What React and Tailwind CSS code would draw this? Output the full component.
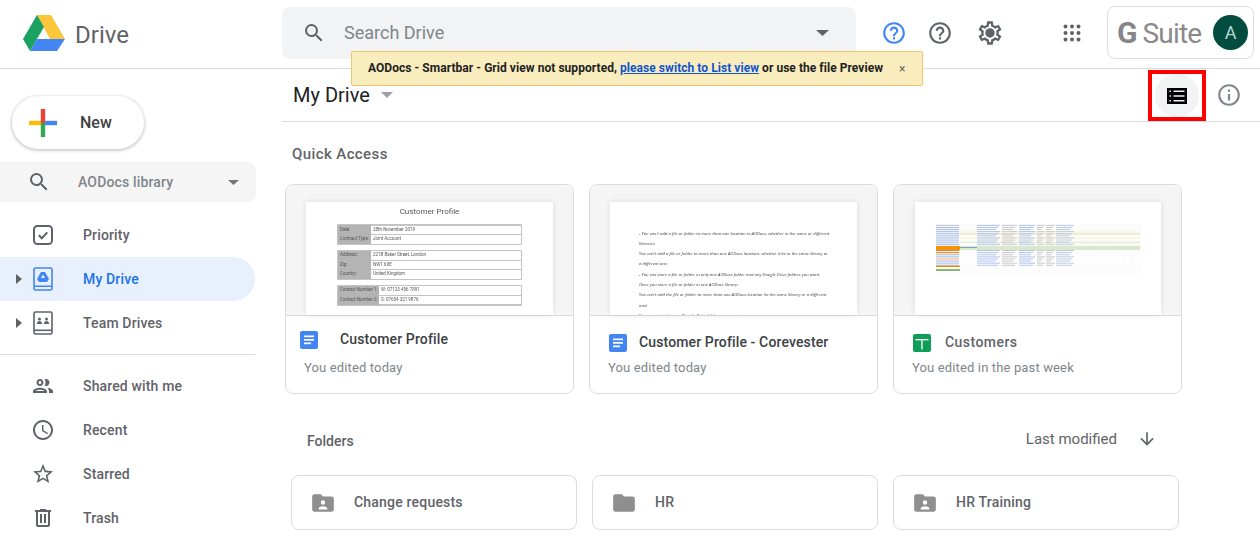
import React from 'react'

const Icon = ({ d, size = 24, className = '', fill = 'currentColor' }) => (
  <svg width={size} height={size} viewBox="0 0 24 24" fill={fill} className={className}>
    <path d={d} />
  </svg>
)

const paths = {
  search: 'M15.5 14h-.79l-.28-.27A6.47 6.47 0 0 0 16 9.5 6.5 6.5 0 1 0 9.5 16c1.61 0 3.09-.59 4.23-1.57l.27.28v.79l5 4.99L20.49 19l-4.99-5zm-6 0C7.01 14 5 11.99 5 9.5S7.01 5 9.5 5 14 7.01 14 9.5 11.99 14 9.5 14z',
  help: 'M11 18h2v-2h-2v2zm1-16C6.48 2 2 6.48 2 12s4.48 10 10 10 10-4.48 10-10S17.52 2 12 2zm0 18c-4.41 0-8-3.59-8-8s3.59-8 8-8 8 3.59 8 8-3.59 8-8 8zm0-14c-2.21 0-4 1.79-4 4h2c0-1.1.9-2 2-2s2 .9 2 2c0 2-3 1.75-3 5h2c0-2.25 3-2.5 3-5 0-2.21-1.79-4-4-4z',
  gear: 'M19.43 12.98c.04-.32.07-.64.07-.98s-.03-.66-.07-.98l2.11-1.65c.19-.15.24-.42.12-.64l-2-3.46c-.12-.22-.39-.3-.61-.22l-2.49 1c-.52-.4-1.08-.73-1.69-.98l-.38-2.65A.488.488 0 0 0 14 2h-4c-.25 0-.46.18-.49.42l-.38 2.65c-.61.25-1.17.59-1.69.98l-2.49-1c-.23-.09-.49 0-.61.22l-2 3.46c-.13.22-.07.49.12.64l2.11 1.65c-.04.32-.07.65-.07.98s.03.66.07.98l-2.11 1.65c-.19.15-.24.42-.12.64l2 3.46c.12.22.39.3.61.22l2.49-1c.52.4 1.08.73 1.69.98l.38 2.65c.03.24.24.42.49.42h4c.25 0 .46-.18.49-.42l.38-2.65c.61-.25 1.17-.59 1.69-.98l2.49 1c.23.09.49 0 .61-.22l2-3.46c.12-.22.07-.49-.12-.64l-2.11-1.65zM17.45 11.27c.04.31.05.52.05.73 0 .21-.02.43-.05.73l-.14 1.13.89.7 1.08.84-.7 1.21-1.27-.51-1.04-.42-.9.68c-.43.32-.84.56-1.25.73l-1.06.43-.16 1.13-.2 1.35h-1.4l-.19-1.35-.16-1.13-1.06-.43c-.43-.18-.83-.41-1.23-.71l-.91-.7-1.06.43-1.27.51-.7-1.21 1.08-.84.89-.7-.14-1.13c-.03-.31-.05-.54-.05-.74s.02-.43.05-.73l.14-1.13-.89-.7-1.08-.84.7-1.21 1.27.51 1.04.42.9-.68c.43-.32.84-.56 1.25-.73l1.06-.43.16-1.13.2-1.35h1.39l.19 1.35.16 1.13 1.06.43c.43.18.83.41 1.23.71l.91.7 1.06-.43 1.27-.51.7 1.21-1.07.85-.89.7.14 1.13zM12 8c-2.21 0-4 1.79-4 4s1.79 4 4 4 4-1.79 4-4-1.79-4-4-4z',
  info: 'M11 7h2v2h-2V7zm0 4h2v6h-2v-6zm1-9C6.48 2 2 6.48 2 12s4.48 10 10 10 10-4.48 10-10S17.52 2 12 2zm0 18c-4.41 0-8-3.59-8-8s3.59-8 8-8 8 3.59 8 8-3.59 8-8 8z',
  people: 'M9 13.75c-2.34 0-7 1.17-7 3.5V19h14v-1.75c0-2.33-4.66-3.5-7-3.5zM4.34 17c.84-.58 2.87-1.25 4.66-1.25s3.82.67 4.66 1.25H4.34zM9 12c1.93 0 3.5-1.57 3.5-3.5S10.93 5 9 5 5.5 6.57 5.5 8.5 7.07 12 9 12zm0-5c.83 0 1.5.67 1.5 1.5S9.83 10 9 10s-1.5-.67-1.5-1.5S8.17 7 9 7zm7.04 6.81c1.16.84 1.96 1.96 1.96 3.44V19h4v-1.75c0-2.02-3.5-3.17-5.96-3.44zM15 12c1.93 0 3.5-1.57 3.5-3.5S16.93 5 15 5c-.54 0-1.04.13-1.5.35.63.89 1 1.98 1 3.15s-.37 2.26-1 3.15c.46.22.96.35 1.5.35z',
  clock: 'M11.99 2C6.47 2 2 6.48 2 12s4.47 10 9.99 10C17.52 22 22 17.52 22 12S17.52 2 11.99 2zM12 20c-4.42 0-8-3.58-8-8s3.58-8 8-8 8 3.58 8 8-3.58 8-8 8zm.5-13H11v6l5.25 3.15.75-1.23-4.5-2.67V7z',
  star: 'M22 9.24l-7.19-.62L12 2 9.19 8.63 2 9.24l5.46 4.73L5.82 21 12 17.27 18.18 21l-1.63-7.03L22 9.24zM12 15.4l-3.76 2.27 1-4.28-3.32-2.88 4.38-.38L12 6.1l1.71 4.04 4.38.38-3.32 2.88 1 4.28L12 15.4z',
  trash: 'M15 4V3H9v1H4v2h1v13c0 1.1.9 2 2 2h10c1.1 0 2-.9 2-2V6h1V4h-5zm2 15H7V6h10v13zM9 8h2v9H9V8zm4 0h2v9h-2V8z',
  arrow: 'M20 12l-1.41-1.41L13 16.17V4h-2v12.17l-5.58-5.59L4 12l8 8 8-8z',
  folder: 'M10 4H4c-1.1 0-2 .9-2 2v12c0 1.1.9 2 2 2h16c1.1 0 2-.9 2-2V8c0-1.1-.9-2-2-2h-8l-2-2z',
  folderShared: 'M20 6h-8l-2-2H4c-1.1 0-2 .9-2 2v12c0 1.1.9 2 2 2h16c1.1 0 2-.9 2-2V8c0-1.1-.9-2-2-2zm-8 3.5a2 2 0 1 1 0 4 2 2 0 0 1 0-4zM16 18H8v-1c0-1.33 2.67-2 4-2s4 .67 4 2v1z',
}

const Caret = ({ className = '' }) => (
  <svg width="10" height="5" viewBox="0 0 10 5" className={className} fill="currentColor" preserveAspectRatio="none">
    <path d="M0 0l5 5 5-5z" />
  </svg>
)

const RowArrow = () => (
  <svg width="6" height="10" viewBox="0 0 6 10" fill="#5f6368">
    <path d="M0 0l6 5-6 5z" />
  </svg>
)

const DriveLogo = () => (
  <svg width="44" height="38" viewBox="0 0 44 38">
    <polygon points="15,1 29,1 43,25 28,25" fill="#fbc63a" />
    <polygon points="8,37 35,37 43,25 15,25" fill="#4486f4" />
    <polygon points="15,1 22,13 8,37 1,25" fill="#1ba261" />
  </svg>
)

const NewPlus = () => (
  <svg width="28" height="28" viewBox="0 0 28 28">
    <rect x="0" y="11.8" width="14" height="4.4" fill="#fbbc05" />
    <rect x="14" y="11.8" width="14" height="4.4" fill="#4285f4" />
    <rect x="11.8" y="14" width="4.4" height="14" fill="#34a853" />
    <rect x="11.8" y="0" width="4.4" height="14" fill="#ea4335" />
  </svg>
)

const PriorityIcon = () => (
  <svg width="22" height="22" viewBox="0 0 22 22" fill="none" stroke="#5f6368" strokeWidth="2">
    <rect x="2" y="2" width="18" height="18" rx="3.5" />
    <path d="M6.8 11.2l3 3 5.5-5.8" />
  </svg>
)

const MyDriveIcon = () => (
  <svg width="20" height="24" viewBox="0 0 20 24">
    <rect x="1" y="1" width="18" height="22" rx="1.5" fill="#e8f0fe" stroke="#4285f4" strokeWidth="1.6" />
    <rect x="1" y="18.5" width="18" height="1.5" fill="#4285f4" />
    <path d="M8 5h4l4 7-2 3H6l-2-3zM10 7.6L8 11h4z" fill="#4285f4" fillRule="evenodd" />
  </svg>
)

const TeamDrivesIcon = () => (
  <svg width="20" height="24" viewBox="0 0 20 24">
    <rect x="1" y="1" width="18" height="22" rx="1.5" fill="#fff" stroke="#5f6368" strokeWidth="1.6" />
    <rect x="1" y="18.5" width="18" height="1.6" fill="#5f6368" />
    <circle cx="6.5" cy="8" r="1.5" fill="#5f6368" />
    <circle cx="13.5" cy="8" r="1.5" fill="#5f6368" />
    <path d="M3.8 13c0-2 1.6-3 2.7-3s2.7 1 2.7 3zM10.8 13c0-2 1.6-3 2.7-3s2.7 1 2.7 3z" fill="#5f6368" />
  </svg>
)

const AppsIcon = () => (
  <svg width="18" height="18" viewBox="0 0 18 18" fill="#5f6368">
    {[2.5, 9, 15.5].map((y) =>
      [2.5, 9, 15.5].map((x) => <circle key={`${x}-${y}`} cx={x} cy={y} r="2" />)
    )}
  </svg>
)

const ListIcon = () => (
  <svg width="20" height="16" viewBox="0 0 20 16" fill="#000">
    <path
      d="M0 0h20v16H0zM2.5 2.6v1.4h1.5V2.6zm4 0v1.4h11V2.6zM2.5 7.3v1.4h1.5V7.3zm4 0v1.4h11V7.3zM2.5 12v1.4h1.5V12zm4 0v1.4h11V12z"
      fillRule="evenodd"
    />
  </svg>
)

const DocsIcon = () => (
  <svg width="18" height="18" viewBox="0 0 18 18">
    <rect width="18" height="18" rx="2" fill="#4285f4" />
    <rect x="4" y="4.5" width="10" height="1.7" fill="#fff" />
    <rect x="4" y="8" width="10" height="1.7" fill="#fff" />
    <rect x="4" y="11.5" width="7" height="1.7" fill="#fff" />
  </svg>
)

const SheetsIcon = () => (
  <svg width="18" height="18" viewBox="0 0 18 18">
    <rect width="18" height="18" rx="2" fill="#0f9d58" />
    <rect x="2.5" y="5" width="13" height="1.3" fill="#fff" />
    <rect x="8.3" y="5" width="1.3" height="10.5" fill="#fff" />
  </svg>
)

const NavItem = ({ icon, label, active, arrow }) => (
  <div
    className={`flex h-[44px] w-[255px] items-center rounded-r-full text-[14px] font-medium tracking-[0.15px] ${
      active ? 'bg-[#e8f0fe] text-[#1a73e8]' : 'text-[#5f6368]'
    }`}
  >
    <div className="flex w-[31px] justify-end pr-[9px]">{arrow && <RowArrow />}</div>
    <div className="flex w-[24px] justify-center">{icon}</div>
    <span className="ml-[28px]">{label}</span>
  </div>
)

const ProfileTable = ({ rows, labelWidth }) => (
  <div className="mb-[4.5px] w-[185px] rounded-[1px] bg-[#c4c4c4] p-[1px]">
    {rows.map(([label, value]) => (
      <div key={label} className="flex h-[9.5px] items-center text-[4.5px] leading-none text-[#555]">
        <span className={`flex h-full items-center bg-[#b4b4b4] pl-[2px] ${labelWidth}`}>{label}</span>
        <span className="flex h-[8.5px] flex-1 items-center bg-white pl-[2px]">{value}</span>
      </div>
    ))}
  </div>
)

const ProfileThumb = () => (
  <div className="flex flex-col items-center blur-[0.35px]">
    <div className="mt-[5px] mb-[7px] text-[8px] leading-[10px] text-[#555]">Customer Profile</div>
    <ProfileTable
      labelWidth="w-[33px]"
      rows={[['Date:', '28th November 2019'], ['Contract Type:', 'Joint Account']]}
    />
    <ProfileTable
      labelWidth="w-[33px]"
      rows={[['Address:', '221B Baker Street, London'], ['Zip:', 'NW1 6XE'], ['Country:', 'United Kingdom']]}
    />
    <ProfileTable
      labelWidth="w-[41px]"
      rows={[['Contact Number 1:', 'W: 07123 456 7891'], ['Contact Number 2:', 'S: 07654 321 9876']]}
    />
  </div>
)

const noteLines = [
  "- You can't add a file or folder to more than one location in AODocs, whether in the same or different",
  'libraries.',
  "You can't add a file or folder to more than one AODocs location, whether it be in the same library or",
  'a different one.',
  '- You can store a file or folder in only one AODocs folder and any Google Drive folders you want.',
  'Once you store a file or folder in one AODocs library:',
  "You can't add the file or folder to more than one AODocs location (in the same library or a different",
  'one).',
  'You can store it in any Google Drive folders you want.',
]

const NotesThumb = () => (
  <div className="pt-[25.5px] pl-[29px] font-['Open_Sans',sans-serif] text-[4.3px] leading-[10.3px] whitespace-nowrap text-[#444] italic blur-[0.25px]">
    {noteLines.map((line) => (
      <div key={line}>{line}</div>
    ))}
  </div>
)

// spreadsheet preview: one entry per row, [band colour, first column colour]
const sheetRows = [
  ['', '#c9c9c9'], ['', '#a9bfe8'], ['', '#a9bfe8'], ['#fff6df', '#a9bfe8'], ['#e6f0dd', '#a9bfe8'],
  ['', '#a9bfe8'], ['#fff6df', '#a9bfe8'], ['', '#a9bfe8'], ['#e6f0dd', '#a9bfe8'], ['', '#a9bfe8'],
  ['#fff6df', '#a9bfe8'], ['', '#a9bfe8'], ['', '#c98a66'], ['', '#f08a00'], ['', '#a9bfe8'],
  ['', '#a9bfe8'], ['', '#f5b98a'], ['', '#a9bfe8'], ['', '#a9bfe8'], ['', '#a9bfe8'],
]
const sheetCols = [
  [41, 23, '#a9bfe8'], [66, 15, '#c4c4c4'], [83, 16, '#a9bfe8'], [101, 8, '#c4c4c4'], [110, 9, '#c4c4c4'], [120, 18, '#b9c6de'],
]

const SheetThumb = () => (
  <svg width="206" height="50" viewBox="0 0 206 50" className="mt-[22px] ml-[21px] blur-[0.4px]">
    {Array.from({ length: 24 }).map((_, i) => (
      <rect key={i} x="0" y={i * 2.1} width="204" height="0.3" fill="#f1f1f1" />
    ))}
    {Array.from({ length: 11 }).map((_, i) => (
      <rect key={i} x={120 + i * 8.4} y="0" width="0.3" height="47" fill="#f1f1f1" />
    ))}
    {sheetRows.map(([band, first], i) => (
      <g key={i}>
        {band && <rect x="24" y={i * 2.1 + 0.6} width="180" height="2" fill={band} />}
        <rect x="0" y={i * 2.1 + 0.8} width="23" height="1.1" fill={first} />
        {sheetCols.map(([x, w, color]) => (
          <rect key={x} x={x} y={i * 2.1 + 0.9} width={w - (i % 3) * 2} height="0.9" fill={color} />
        ))}
      </g>
    ))}
    <rect x="24" y="22" width="180" height="4" fill="#d9e7cf" />
    <rect x="0" y="22" width="24" height="4" fill="#f59300" />
    <rect x="24" y="23" width="17" height="1" fill="#7da3c9" />
    <rect x="0" y="41.7" width="24" height="1.3" fill="#f08a00" />
    <rect x="0" y="45" width="24" height="2" fill="#8fb47a" />
  </svg>
)

const FileCard = ({ thumb, icon, title, sub, titleTop, iconLeft, titleClass, thumbPad = 'pl-[20px] pr-[20px]' }) => (
  <div className="flex h-[210px] w-[289px] flex-col overflow-hidden rounded-lg border border-[#dadce0]">
    <div className={`h-[131px] border-b border-[#dadce0] bg-[#f5f5f5] pt-[17px] ${thumbPad}`}>
      <div className="h-[113px] overflow-hidden bg-white shadow-[0_0_6px_rgba(0,0,0,0.1)]">{thumb}</div>
    </div>
    <div className={`flex items-center ${titleTop} ${iconLeft}`}>
      {icon}
      <span className={`text-[14px] font-medium tracking-[0.13px] ${titleClass}`}>{title}</span>
    </div>
    <div className="mt-auto mb-[17px] pl-[18px] text-[13px] leading-[16px] tracking-[0.14px] text-[#80868b]">{sub}</div>
  </div>
)

const FolderCard = ({ shared, name }) => (
  <div className="flex h-[55px] w-[286px] items-center rounded-lg border border-[#dadce0] pl-[19px]">
    <Icon d={shared ? paths.folderShared : paths.folder} size={26} className="-ml-[1px] text-[#8f8f8f]" />
    <span className="ml-[18px] text-[14px] font-medium tracking-[0.2px] text-[#5f6368]">{name}</span>
  </div>
)

export default function App() {
  return (
    <div className="relative h-[538px] w-[1260px] overflow-hidden bg-white font-['Roboto',sans-serif]">
      {/* Top bar */}
      <header className="flex h-[69px] items-center border-b border-[#dadce0]">
        <div className="flex w-[282px] items-center pb-[2px] pl-[22px]">
          <DriveLogo />
          <span className="mt-[4px] ml-[9px] text-[24px] text-[#5f6368]">Drive</span>
        </div>
        <div className="mb-[3px] flex h-[52px] w-[574px] items-center rounded-lg bg-[#f1f3f4] pl-[20px] pr-[27px]">
          <Icon d={paths.search} className="text-[#5f6368]" />
          <span className="ml-[18px] flex-1 text-[18px] text-[#80868b]">Search Drive</span>
          <Caret className="h-[6px] w-[13px] text-[#5f6368]" />
        </div>
        <Icon d={paths.help} size={26} className="mb-[3px] ml-[25px] text-[#4285f4]" />
        <Icon d={paths.help} size={26} className="mb-[3px] ml-[20px] text-[#5f6368]" />
        <Icon d={paths.gear} size={28} className="mb-[3px] ml-[23px] text-[#5f6368]" />
        <div className="mb-[3px] ml-[59px]">
          <AppsIcon />
        </div>
        <div className="mb-[3px] ml-[26px] flex h-[53px] w-[147px] items-center rounded-lg border border-[#dadce0] pl-[9px] pr-[5px]">
          <span className="mt-[1px] text-[30px] font-bold leading-none text-[#868686]">G</span>
          <span className="mt-[2px] ml-[5px] text-[28px] leading-none tracking-[-0.8px] text-[#8a8a8a]">Suite</span>
          <div className="ml-auto flex h-[35px] w-[35px] items-center justify-center rounded-full bg-[#004d40] text-[18px] text-[#b9d6cf]">
            A
          </div>
        </div>
      </header>

      {/* Smartbar notice */}
      <div className="absolute top-[51px] left-[351px] flex h-[35px] w-[572px] items-center rounded-[2px] border border-[#f0c36d] bg-[#f9edbe] pl-[16px] text-[12px] font-bold tracking-[0.05px] text-[#222]">
        <span className="mb-[1px]">
          AODocs - Smartbar - Grid view not supported,{' '}
          <a href="#list" className="text-[#1155cc] underline">please switch to List view</a> or use the file Preview
        </span>
        <span className="ml-[16px] text-[12px] font-normal text-[#666]">×</span>
      </div>

      <div className="flex">
        {/* Sidebar */}
        <aside className="w-[282px] shrink-0">
          <div className="mt-[27px] ml-[12px] flex h-[53px] w-[132px] items-center rounded-full bg-white pl-[17px] shadow-[0_1px_3px_1px_rgba(60,64,67,0.25)]">
            <NewPlus />
            <span className="ml-[23px] text-[16px] font-medium text-[#3c4043]">New</span>
          </div>
          <div className="mt-[13px] flex h-[40px] w-[256px] items-center rounded-r-lg bg-[#f5f5f5] pl-[27px] pr-[17px]">
            <Icon d={paths.search} className="text-[#5f6368]" />
            <span className="ml-[27px] flex-1 text-[14px] font-medium tracking-[0.15px] text-[#80868b]">AODocs library</span>
            <Caret className="h-[5px] w-[11px] text-[#757575]" />
          </div>
          <nav className="mt-[11px]">
            <NavItem icon={<PriorityIcon />} label="Priority" />
            <NavItem icon={<MyDriveIcon />} label="My Drive" active arrow />
            <NavItem icon={<TeamDrivesIcon />} label="Team Drives" arrow />
            <div className="my-[9px] h-px w-[255px] bg-[#dadce0]" />
            <NavItem icon={<Icon d={paths.people} size={28} className="text-[#5f6368]" />} label="Shared with me" />
            <NavItem icon={<Icon d={paths.clock} size={26} className="text-[#5f6368]" />} label="Recent" />
            <NavItem icon={<Icon d={paths.star} size={26} className="text-[#5f6368]" />} label="Starred" />
            <NavItem icon={<Icon d={paths.trash} size={26} className="text-[#5f6368]" />} label="Trash" />
          </nav>
        </aside>

        {/* Main content */}
        <main className="flex-1">
          <div className="flex h-[53px] items-center border-b border-[#dadce0] pl-[11px]">
            <span className="text-[20px] text-[#202124]">My Drive</span>
            <Caret className="ml-[11px] h-[6px] w-[12px] text-[#9aa0a6]" />
            <div className="mr-[10px] ml-auto flex h-[51px] w-[58px] items-center justify-center self-end border-[4px] border-[#f00]">
              <div className="flex h-[43px] w-[44px] shrink-0 items-center justify-center rounded-full bg-[#f1f3f4]">
                <ListIcon />
              </div>
            </div>
            <Icon d={paths.info} size={26} className="mr-[18px] text-[#80868b]" />
          </div>

          <div className="mt-[22px] pl-[10px] text-[15px] leading-[20px] font-medium tracking-[0.4px] text-[#5f6368]">Quick Access</div>
          <div className="mt-[20px] flex gap-[15px] pl-[3px]">
            <FileCard
              thumb={<ProfileThumb />}
              icon={<DocsIcon />}
              title="Customer Profile"
              sub="You edited today"
              titleTop="mt-[13px]"
              iconLeft="pl-[14px]"
              titleClass="ml-[22px] text-[#3c4043]"
            />
            <FileCard
              thumb={<NotesThumb />}
              icon={<DocsIcon />}
              title="Customer Profile - Corevester"
              sub="You edited today"
              titleTop="mt-[16px]"
              iconLeft="pl-[19px]"
              titleClass="ml-[12px] text-[#3c4043]"
            />
            <FileCard
              thumb={<SheetThumb />}
              icon={<SheetsIcon />}
              title="Customers"
              sub="You edited in the past week"
              titleTop="mt-[16px]"
              iconLeft="pl-[19px]"
              titleClass="ml-[14px] tracking-[0.45px] text-[#5f6368]"
              thumbPad="pl-[21px] pr-[20px]"
            />
          </div>

          <div className="mt-[33px] flex h-[24px] items-center pl-[25px] pr-[103px]">
            <span className="mt-[4px] text-[14px] font-medium text-[#5f6368]">Folders</span>
            <span className="ml-auto text-[15px] text-[#5f6368]">Last modified</span>
            <Icon d={paths.arrow} size={20} className="ml-[20px] text-[#5f6368]" />
          </div>
          <div className="mt-[24px] flex gap-[15px] pl-[9px]">
            <FolderCard shared name="Change requests" />
            <FolderCard name="HR" />
            <FolderCard shared name="HR Training" />
          </div>
        </main>
      </div>
    </div>
  )
}
